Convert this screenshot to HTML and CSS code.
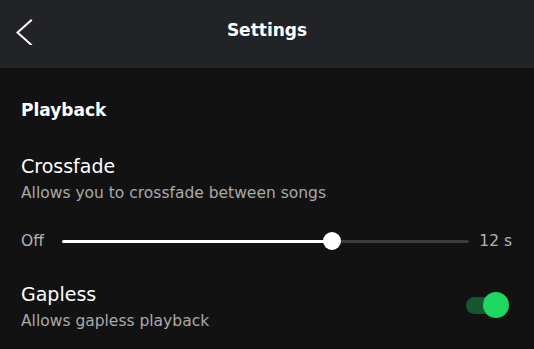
FILE: index.html
```html
<!DOCTYPE html>
<html lang="en">
<head>
<meta charset="utf-8">
<title>Settings</title>
<link rel="stylesheet" href="styles.css">
</head>
<body>
<div class="app">
  <header class="topbar">
    <div class="topbar-left">
      <button class="back" aria-label="Back">
        <svg width="18" height="30" viewBox="0 0 18 30"><path d="M15 5.5 L1.5 17.5 L15 29.5" fill="none" stroke="#ffffff" stroke-width="2" stroke-linecap="square"/></svg>
      </button>
    </div>
    <h1 class="title">Settings</h1>
    <div class="topbar-right"></div>
  </header>
  <main class="content">
    <h2 class="section-title">Playback</h2>
    <section class="setting crossfade">
      <div class="setting-name">Crossfade</div>
      <div class="setting-desc">Allows you to crossfade between songs</div>
      <div class="slider-row">
        <span class="slider-label">Off</span>
        <div class="slider">
          <div class="slider-track"></div>
          <div class="slider-fill" style="width: 66.3%"><span class="slider-knob"></span></div>
        </div>
        <span class="slider-label slider-max">12 s</span>
      </div>
    </section>
    <section class="setting toggle-setting">
      <div class="setting-text">
        <div class="setting-name">Gapless</div>
        <div class="setting-desc">Allows gapless playback</div>
      </div>
      <div class="switch on"><span class="switch-track"></span><span class="switch-knob"></span></div>
    </section>
  </main>
</div>
</body>
</html>
```

FILE: styles.css
```css
* { box-sizing: border-box; }
html, body { margin: 0; padding: 0; }
body {
  background: #121212;
  color: #ffffff;
  font-family: "DejaVu Sans", "Liberation Sans", sans-serif;
  width: 534px;
  height: 349px;
  overflow: hidden;
}
.topbar {
  height: 68px;
  background: #222326;
  display: grid;
  grid-template-columns: 1fr auto 1fr;
  align-items: center;
  padding-bottom: 9px;
}
.topbar-left { padding-left: 16px; display: flex; align-items: center; }
.back {
  background: none;
  border: 0;
  padding: 0;
  margin: 0;
  display: block;
  width: 18px;
  height: 30px;
}
.back svg { display: block; }
.title {
  margin: 0;
  font-size: 17px;
  font-weight: bold;
  line-height: 24px;
  letter-spacing: 0;
}
.content {
  padding: 30px 22px 0 21px;
}
.section-title {
  margin: 0;
  font-size: 17px;
  font-weight: bold;
  line-height: 24px;
}
.setting-name {
  font-size: 19px;
  line-height: 24px;
}
.setting-desc {
  margin-top: 5px;
  font-size: 15.5px;
  line-height: 21px;
  color: #a9a9a9;
}
.crossfade { margin-top: 32px; }
.slider-row {
  margin-top: 27px;
  height: 20px;
  display: flex;
  align-items: center;
}
.slider-label {
  font-size: 15.5px;
  line-height: 20px;
  color: #b3b3b3;
}
.slider {
  position: relative;
  flex: 1;
  height: 3px;
  margin-left: 18px;
  margin-right: 10px;
}
.slider-track {
  height: 3px;
  background: #3c3c3c;
  border-radius: 2px;
}
.slider-fill {
  position: absolute;
  left: 0;
  top: 0;
  height: 3px;
  background: #ffffff;
  border-radius: 2px;
}
.slider-knob {
  position: absolute;
  right: -9px;
  top: -7.5px;
  width: 18px;
  height: 18px;
  border-radius: 50%;
  background: #ffffff;
}
.toggle-setting {
  margin-top: 31px;
  display: flex;
  align-items: center;
  justify-content: space-between;
  padding-right: 3px;
}
.switch {
  position: relative;
  width: 43px;
  height: 26px;
  margin-bottom: 4px;
}
.switch-track {
  position: absolute;
  left: 0;
  top: 4.5px;
  width: 38px;
  height: 17px;
  border-radius: 9px;
  background: #17572d;
}
.switch-knob {
  position: absolute;
  right: 0;
  top: 0;
  width: 26px;
  height: 26px;
  border-radius: 50%;
  background: #1ed760;
}
```
